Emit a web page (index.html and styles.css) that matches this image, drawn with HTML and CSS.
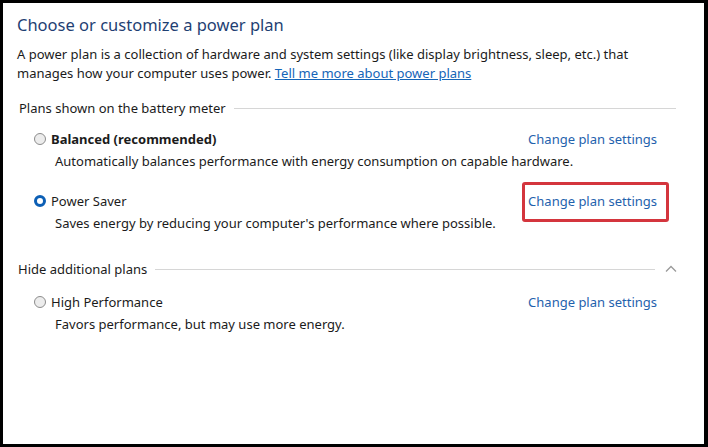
FILE: index.html
```html
<!DOCTYPE html>
<html>
<head>
<meta charset="utf-8">
<link rel="stylesheet" href="styles.css">
</head>
<body>
<div class="window">
  <h1 class="title">Choose or customize a power plan</h1>
  <p class="intro">A power plan is a collection of hardware and system settings (like display brightness, sleep, etc.) that manages how your computer uses power. <a class="intro-link" href="#">Tell me more about power plans</a></p>

  <div class="group-header">
    <span class="group-label">Plans shown on the battery meter</span>
    <span class="group-line"></span>
  </div>

  <div class="plan plan-first">
    <div class="plan-head">
      <span class="radio"></span>
      <span class="plan-name bold">Balanced (recommended)</span>
      <a class="plan-link" href="#">Change plan settings</a>
    </div>
    <div class="plan-desc">Automatically balances performance with energy consumption on capable hardware.</div>
  </div>

  <div class="plan">
    <div class="plan-head">
      <span class="radio radio-checked"></span>
      <span class="plan-name">Power Saver</span>
      <a class="plan-link highlighted" href="#">Change plan settings</a>
    </div>
    <div class="plan-desc">Saves energy by reducing your computer's performance where possible.</div>
  </div>

  <div class="group-header group-hide">
    <span class="group-label">Hide additional plans</span>
    <span class="group-line"></span>
    <svg class="chevron" width="12" height="8" viewBox="0 0 12 8"><polyline points="1,6.5 6,1.5 11,6.5" fill="none" stroke="#9a9a9a" stroke-width="1.3"/></svg>
  </div>

  <div class="plan plan-extra">
    <div class="plan-head">
      <span class="radio"></span>
      <span class="plan-name">High Performance</span>
      <a class="plan-link" href="#">Change plan settings</a>
    </div>
    <div class="plan-desc">Favors performance, but may use more energy.</div>
  </div>
</div>
</body>
</html>
```
FILE: styles.css
```css
* { box-sizing: border-box; }
html, body { margin: 0; padding: 0; background: #000; }
body {
  width: 708px;
  height: 447px;
  font-family: "Noto Sans", "Open Sans", sans-serif;
  color: #1b1b1b;
}
.window {
  width: 708px;
  height: 447px;
  background: #fff;
  border-top: 3px solid #000;
  border-left: 3px solid #000;
  border-right: 4px solid #000;
  border-bottom: 3px solid #000;
  padding: 10px 0 0 14px;
}
.title {
  margin: 0;
  font-weight: 400;
  font-size: 16.5px;
  line-height: 24px;
  color: #1f3f73;
}
.intro {
  margin: 8px 0 0;
  width: 640px;
  font-size: 13px;
  line-height: 19px;
}
.intro-link {
  color: #1565b8;
  text-decoration: underline;
}
.group-header {
  display: flex;
  align-items: center;
  margin-top: 16px;
  padding-left: 2px;
  width: 659px;
  height: 19px;
  font-size: 13px;
  line-height: 19px;
}
.group-line {
  flex: 1;
  height: 1px;
  background: #d6d6d6;
  margin-left: 8px;
}
.group-hide { margin-top: 27px; width: 660px; }
.group-hide .group-label { margin-left: -1px; }
.group-hide .group-line { margin-right: 10px; }
.chevron { display: block; margin-top: -2px; }
.plan { padding-left: 17px; margin-top: 20px; width: 640px; }
.plan-first { margin-top: 11px; }
.plan-extra { margin-top: 13px; }
.plan-head {
  display: flex;
  align-items: center;
  height: 20px;
  font-size: 13px;
  line-height: 20px;
}
.radio {
  width: 12px;
  height: 12px;
  border-radius: 50%;
  border: 1px solid #8c8c8c;
  background: #ececec;
  margin-right: 5px;
  flex: none;
}
.radio-checked {
  border: 3.5px solid #0c5fb5;
  background: #fff;
}
.bold { font-weight: 700; }
.plan-link {
  margin-left: auto;
  color: #1f62ad;
  text-decoration: none;
}
.highlighted { position: relative; }
.highlighted::after {
  content: "";
  position: absolute;
  top: -9px;
  bottom: -11px;
  left: -6px;
  right: -12px;
  border: 3px solid #d4353d;
  border-radius: 3px;
}
.plan-desc {
  padding-left: 21px;
  margin-top: 2px;
  font-size: 13px;
  line-height: 20px;
}
```
